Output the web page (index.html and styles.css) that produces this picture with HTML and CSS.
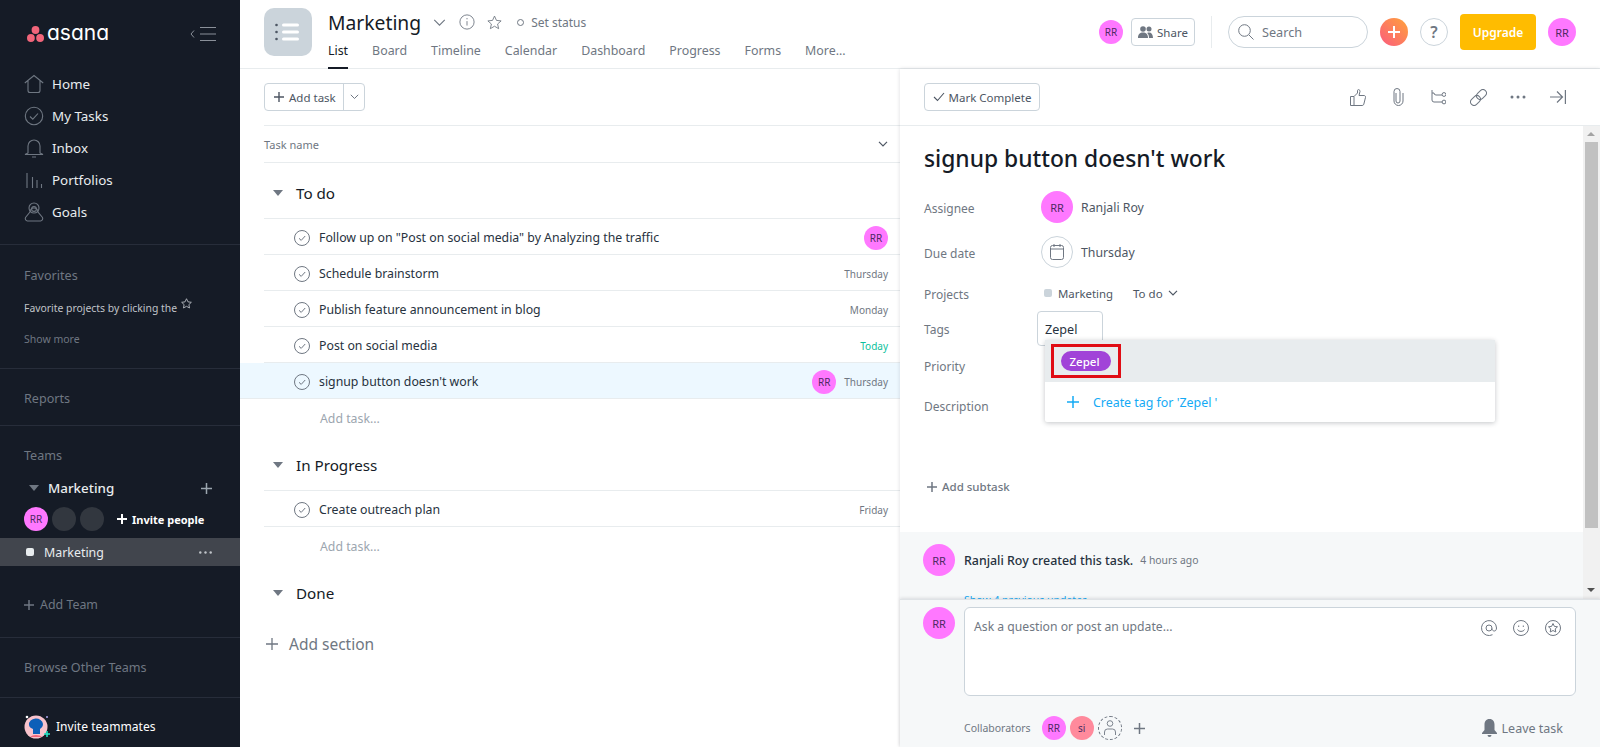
FILE: index.html
```html
<!DOCTYPE html>
<html lang="en">
<head>
    <meta charset="UTF-8">
    <title>Marketing - Asana</title>
    <link rel="stylesheet" href="styles.css">
</head>
<body>
    <aside class="sidebar">
        <div class="brand">
            <div class="logo">
                <svg width="17" height="16" viewBox="0 0 17 16"><circle cx="8.500" cy="4" r="3.900" fill="#f1657a"/><circle cx="3.900" cy="12" r="3.900" fill="#f1657a"/><circle cx="13.100" cy="12" r="3.900" fill="#f1657a"/></svg>
                <span class="logo-word">asana</span>
            </div>
            <svg class="collapse" width="26" height="14" viewBox="0 0 26 14" fill="none" stroke="#8a9099"><path d="M4 3.500 1 7l3 3.500M10 .5h16M10 7h16M10 13.500h16"/></svg>
        </div>
        <nav class="nav">
            <a class="nav-item"><svg width="20" height="20" viewBox="0 0 20 20" fill="none" stroke="#6f7782" stroke-width="1.100"><path d="M.8 9 10 1.500 19.200 9M4 7v9.500a2 2 0 0 0 2 2h8a2 2 0 0 0 2-2V7"/></svg>Home</a>
            <a class="nav-item"><svg width="20" height="20" viewBox="0 0 20 20" fill="none" stroke="#6f7782" stroke-width="1.100"><circle cx="10" cy="10" r="8.700"/><path d="m6 10.500 2.800 2.600L14 7.500"/></svg>My Tasks</a>
            <a class="nav-item"><svg width="20" height="20" viewBox="0 0 20 20" fill="none" stroke="#6f7782" stroke-width="1.100"><path d="M4 15V8a6 6 0 0 1 12 0v7l3 1.500H1ZM8 19h4"/></svg>Inbox</a>
            <a class="nav-item"><svg width="20" height="20" viewBox="0 0 20 20" fill="none" stroke="#6f7782" stroke-width="1.100"><path d="M3 3v15M8.500 7v11M13 10v8M17.500 14v4"/></svg>Portfolios</a>
            <a class="nav-item"><svg width="20" height="20" viewBox="0 0 20 20" fill="none" stroke="#6f7782" stroke-width="1.100"><circle cx="10" cy="6" r="5"/><circle cx="10" cy="7" r="2.400"/><path d="M6 10 1.500 15.500a2.500 2.500 0 0 0 2 3.500h13a2.500 2.500 0 0 0 2-3.500L14 10a4 4 0 0 0-8 0Z"/></svg>Goals</a>
        </nav>
        <section class="side-block favorites">
            <div class="side-title">Favorites</div>
            <div class="fav-hint">Favorite projects by clicking the <svg class="fav-star" width="11" height="11" viewBox="0 0 12 12" fill="none" stroke="#b4b8be"><path d="m6 .8 1.600 3.400 3.700.5-2.700 2.500.7 3.700L6 9.100l-3.300 1.800.7-3.700L.7 4.700l3.700-.5Z"/></svg></div>
            <div class="show-more">Show more</div>
        </section>
        <section class="side-block reports"><div class="side-title">Reports</div></section>
        <section class="side-block teams">
            <div class="side-title">Teams</div>
            <div class="team-row">
                <span class="caret caret-side"></span>
                <span class="team-name">Marketing</span>
                <svg width="11" height="11" viewBox="0 0 11 11" stroke="#9ca6af" stroke-width="1.500"><path d="M5.500 0v11M0 5.500h11"/></svg>
            </div>
            <div class="team-people">
                <span class="avatar">RR</span>
                <span class="avatar avatar-empty"></span>
                <span class="avatar avatar-empty"></span>
                <span class="invite"><svg width="10" height="10" viewBox="0 0 10 10" stroke="#fff" stroke-width="2"><path d="M5 0v10M0 5h10"/></svg>Invite people</span>
            </div>
            <div class="project-row">
                <span class="project-dot"></span>
                <span class="project-name">Marketing</span>
                <svg width="13" height="3" viewBox="0 0 13 3" fill="#c0c4c9"><circle cx="1.300" cy="1.500" r="1.200"/><circle cx="6.500" cy="1.500" r="1.200"/><circle cx="11.700" cy="1.500" r="1.200"/></svg>
            </div>
            <div class="add-team"><svg width="10" height="10" viewBox="0 0 10 10" stroke="#6f7782" stroke-width="1.500"><path d="M5 0v10M0 5h10"/></svg>Add Team</div>
        </section>
        <section class="side-block browse"><div class="side-title">Browse Other Teams</div></section>
        <div class="invite-mates">
            <svg width="26" height="26" viewBox="0 0 26 26"><circle cx="12" cy="13" r="11.500" fill="#f8c3cc"/><path d="M5 11a7 6 0 0 1 14-1c0 3-2 4-3 5v5H9v-5c-2-1-4-2-4-4Z" fill="#0d5fb8"/><path d="M6 23a7 4 0 0 1 12 0Z" fill="#f1657a"/><path d="M20 20h6M23 17v6" stroke="#25e8c8" stroke-width="1.500"/><circle cx="23" cy="3" r="1" fill="#a9a4ee"/><circle cx="3" cy="3" r="1.300" fill="#fff"/></svg>
            <span>Invite teammates</span>
        </div>
    </aside>

    <div class="main">
        <header class="topbar">
            <div class="project-icon">
                <svg width="24" height="18" viewBox="0 0 24 18"><g fill="#4d5663"><circle cx="1.500" cy="2" r="1.300"/><circle cx="1.500" cy="9" r="1.300"/><circle cx="1.500" cy="16" r="1.300"/></g><g fill="#fff"><rect x="7" y=".5" width="17" height="3" rx="1.500"/><rect x="7" y="7.500" width="17" height="3" rx="1.500"/><rect x="7" y="14.500" width="17" height="3" rx="1.500"/></g></svg>
            </div>
            <div class="project-head">
                <div class="project-title">
                    <h1>Marketing</h1>
                    <svg class="title-chevron" width="13" height="7" viewBox="0 0 14 8" fill="none" stroke="#6f7782" stroke-width="1.300"><path d="m1 1 6 6 6-6"/></svg>
                    <svg class="title-info" width="16" height="16" viewBox="0 0 18 18" fill="none" stroke="#6f7782"><circle cx="9" cy="9" r="8"/><path d="M9 8v5M9 4.500v1.500"/></svg>
                    <svg class="title-star" width="15" height="15" viewBox="0 0 17 17" fill="none" stroke="#6f7782"><path d="m8.500 1.200 2.200 4.900 5.300.6-4 3.500 1.200 5.300-4.700-2.800-4.700 2.800 1.200-5.300-4-3.500 5.300-.6Z"/></svg>
                    <span class="status"><i class="status-dot"></i>Set status</span>
                </div>
                <div class="tabs">
                    <a class="tab tab-active">List</a>
                    <a class="tab">Board</a>
                    <a class="tab">Timeline</a>
                    <a class="tab">Calendar</a>
                    <a class="tab">Dashboard</a>
                    <a class="tab">Progress</a>
                    <a class="tab">Forms</a>
                    <a class="tab">More...</a>
                </div>
            </div>
            <div class="top-actions">
                <span class="avatar">RR</span>
                <button class="share">
                    <svg width="15" height="12" viewBox="0 0 15 12" fill="#6f7782"><circle cx="5" cy="3" r="2.800"/><circle cx="11" cy="3" r="2.500"/><path d="M0 12c0-4 2-5.500 5-5.500s5 1.500 5 5.500ZM11 12h4c0-3.500-1.500-5.500-4-5.500-.7 0-1.300.1-1.800.4 1.200 1 1.800 2.800 1.800 5.100Z"/></svg>
                    Share
                </button>
                <span class="top-sep"></span>
                <div class="search">
                    <svg width="16" height="16" viewBox="0 0 16 16" fill="none" stroke="#6f7782"><circle cx="6.500" cy="6.500" r="5.800"/><path d="m11 11 4.500 4.500"/></svg>
                    <span>Search</span>
                </div>
                <span class="round-add">
                    <svg width="12" height="12" viewBox="0 0 12 12" stroke="#fff" stroke-width="2"><path d="M6 0v12M0 6h12"/></svg>
                </span>
                <span class="round-help">?</span>
                <button class="upgrade">Upgrade</button>
                <span class="avatar avatar-lg">RR</span>
            </div>
        </header>

        <div class="workspace">
            <section class="list-pane">
                <div class="list-toolbar">
                    <div class="add-task-btn">
                        <span class="add-task-main"><svg width="10" height="10" viewBox="0 0 10 10" stroke="#4d5663" stroke-width="1.400"><path d="M5 0v10M0 5h10"/></svg>Add task</span>
                        <span class="add-task-more"><svg width="9" height="6" viewBox="0 0 9 6" fill="none" stroke="#6f7782"><path d="m.8.8 3.700 3.700L8.200.8"/></svg></span>
                    </div>
                </div>
                <div class="list-head">
                    <span>Task name</span>
                    <svg width="10" height="6" viewBox="0 0 10 6" fill="none" stroke="#4d5663" stroke-width="1.200"><path d="m1 .8 4 4 4-4"/></svg>
                </div>

                <div class="section-head section-first"><span class="caret"></span>To do</div>
                <div class="task">
                    <svg class="check" width="16" height="16" viewBox="0 0 16 16" fill="none" stroke="#6f7782"><circle cx="8" cy="8" r="7.500"/><path d="m5 8.300 2.200 2.100L11.200 6"/></svg>
                    <span class="task-name">Follow up on "Post on social media" by Analyzing the traffic</span>
                    <span class="avatar">RR</span>
                </div>
                <div class="task">
                    <svg class="check" width="16" height="16" viewBox="0 0 16 16" fill="none" stroke="#6f7782"><circle cx="8" cy="8" r="7.500"/><path d="m5 8.300 2.200 2.100L11.200 6"/></svg>
                    <span class="task-name">Schedule brainstorm</span>
                    <span class="task-date">Thursday</span>
                </div>
                <div class="task">
                    <svg class="check" width="16" height="16" viewBox="0 0 16 16" fill="none" stroke="#6f7782"><circle cx="8" cy="8" r="7.500"/><path d="m5 8.300 2.200 2.100L11.200 6"/></svg>
                    <span class="task-name">Publish feature announcement in blog</span>
                    <span class="task-date">Monday</span>
                </div>
                <div class="task">
                    <svg class="check" width="16" height="16" viewBox="0 0 16 16" fill="none" stroke="#6f7782"><circle cx="8" cy="8" r="7.500"/><path d="m5 8.300 2.200 2.100L11.200 6"/></svg>
                    <span class="task-name">Post on social media</span>
                    <span class="task-date task-today">Today</span>
                </div>
                <div class="task task-selected">
                    <svg class="check" width="16" height="16" viewBox="0 0 16 16" fill="none" stroke="#6f7782"><circle cx="8" cy="8" r="7.500"/><path d="m5 8.300 2.200 2.100L11.200 6"/></svg>
                    <span class="task-name">signup button doesn't work</span>
                    <span class="avatar">RR</span>
                    <span class="task-date">Thursday</span>
                </div>
                <div class="add-row">Add task...</div>

                <div class="section-head"><span class="caret"></span>In Progress</div>
                <div class="task">
                    <svg class="check" width="16" height="16" viewBox="0 0 16 16" fill="none" stroke="#6f7782"><circle cx="8" cy="8" r="7.500"/><path d="m5 8.300 2.200 2.100L11.200 6"/></svg>
                    <span class="task-name">Create outreach plan</span>
                    <span class="task-date">Friday</span>
                </div>
                <div class="add-row">Add task...</div>

                <div class="section-head section-done"><span class="caret"></span>Done</div>
                <div class="add-section"><svg width="12" height="12" viewBox="0 0 12 12" stroke="#6f7782" stroke-width="1.300"><path d="M6 0v12M0 6h12"/></svg>Add section</div>
            </section>

            <section class="detail">
                <div class="detail-toolbar">
                    <button class="mark-complete">
                        <svg width="12" height="10" viewBox="0 0 12 10" fill="none" stroke="#4d5663" stroke-width="1.100"><path d="m1 5 3.500 3.500L11 1"/></svg>
                        Mark Complete
                    </button>
                    <div class="detail-icons">
                        <svg width="16" height="17" viewBox="0 0 16 17" fill="none" stroke="#6f7782"><path d="M.5 7.500h3.500v9H.5ZM4 7.500 7.500 4V1.500c0-1.300 2.500-1.300 2.500.8L9 6.500h5c1 0 1.800.9 1.500 1.900l-1.700 6.800c-.2.800-.8 1.300-1.600 1.300H4"/></svg>
                        <svg width="12" height="18" viewBox="0 0 12 18" fill="none" stroke="#6f7782"><path d="M4 5v8a2 2 0 0 0 4 0V3.500a3 3 0 0 0-6 0V13a4.500 4.500 0 0 0 9 0V5"/></svg>
                        <svg width="15" height="15" viewBox="0 0 15 15" fill="none" stroke="#6f7782"><path d="M1 0v10a2 2 0 0 0 2 2h8M1 3h2a2 2 0 0 0 2 2h6"/><circle cx="13" cy="4.500" r="1.900"/><circle cx="13" cy="12" r="1.900"/></svg>
                        <svg width="17" height="17" viewBox="0 0 17 17" fill="none" stroke="#6f7782"><rect x="0" y="8" width="11" height="7" rx="3.500" transform="rotate(-45 5.500 11.500)"/><rect x="6" y="2" width="11" height="7" rx="3.500" transform="rotate(-45 11.500 5.500)"/></svg>
                        <svg width="16" height="4" viewBox="0 0 16 4" fill="#6f7782"><circle cx="2" cy="2" r="1.500"/><circle cx="8" cy="2" r="1.500"/><circle cx="14" cy="2" r="1.500"/></svg>
                        <svg width="16" height="14" viewBox="0 0 16 14" fill="none" stroke="#6f7782" stroke-width="1.200"><path d="M0 7h12M7 1.500 12.500 7 7 12.500M15.400 0v14"/></svg>
                    </div>
                </div>

                <div class="detail-scroll">
                    <div class="detail-body">
                        <h2 class="detail-title">signup button doesn't work</h2>
                        <div class="field field-assignee">
                            <span class="field-label">Assignee</span>
                            <span class="avatar avatar-xl">RR</span>
                            <span class="field-value">Ranjali Roy</span>
                        </div>
                        <div class="field field-due">
                            <span class="field-label">Due date</span>
                            <span class="date-circle"><svg width="14" height="16" viewBox="0 0 14 16" fill="none" stroke="#6f7782"><rect x=".5" y="1.500" width="13" height="14" rx="2"/><path d="M.5 5h13M4 0v3M10 0v3"/></svg></span>
                            <span class="field-value">Thursday</span>
                        </div>
                        <div class="field field-projects">
                            <span class="field-label">Projects</span>
                            <span class="project-chip"></span>
                            <span class="project-link">Marketing</span>
                            <span class="project-section">To do</span>
                            <svg width="10" height="6" viewBox="0 0 10 6" fill="none" stroke="#4d5663" stroke-width="1.200"><path d="m1 .8 4 4 4-4"/></svg>
                        </div>
                        <div class="field field-tags">
                            <span class="field-label">Tags</span>
                            <span class="tag-input">Zepel</span>
                        </div>
                        <div class="field field-priority"><span class="field-label">Priority</span></div>
                        <div class="field field-description"><span class="field-label">Description</span></div>
                        <div class="add-subtask"><svg width="10" height="10" viewBox="0 0 10 10" stroke="#6f7782" stroke-width="1.500"><path d="M5 0v10M0 5h10"/></svg>Add subtask</div>

                        <div class="tag-menu">
                            <div class="tag-option">
                                <span class="tag-highlight"><span class="tag-pill">Zepel</span></span>
                            </div>
                            <div class="tag-create"><span class="tag-create-plus"><svg width="12" height="12" viewBox="0 0 12 12" stroke="#14aaf5" stroke-width="1.500"><path d="M6 0v12M0 6h12"/></svg></span>Create tag for 'Zepel '</div>
                        </div>
                    </div>
                    <div class="activity">
                        <div class="activity-row">
                            <span class="avatar avatar-xl">RR</span>
                            <span class="activity-text">Ranjali Roy created this task.</span>
                            <span class="activity-time">4 hours ago</span>
                        </div>
                        <div class="previous-updates">Show 4 previous updates</div>
                    </div>
                    <div class="scrollbar">
                        <span class="scroll-arrow scroll-up"></span>
                        <span class="scroll-thumb"></span>
                        <span class="scroll-arrow scroll-down"></span>
                    </div>
                </div>

                <div class="composer">
                    <div class="composer-row">
                        <span class="avatar avatar-xl">RR</span>
                        <div class="comment-box">
                            <span>Ask a question or post an update...</span>
                            <div class="comment-icons">
                                <svg width="16" height="16" viewBox="0 0 16 16" fill="none" stroke="#6f7782"><path d="M11.500 14.700A7.500 7.500 0 1 1 15.500 8c0 2-1 3-2.200 3S11 10 11 8.500"/><circle cx="8" cy="8" r="3"/></svg>
                                <svg width="16" height="16" viewBox="0 0 16 16" fill="none" stroke="#6f7782"><circle cx="8" cy="8" r="7.500"/><path d="M4.500 9.500c1 2.500 6 2.500 7 0M5.700 5.500v1.500M10.300 5.500v1.500"/></svg>
                                <svg width="16" height="16" viewBox="0 0 16 16" fill="none" stroke="#6f7782"><circle cx="8" cy="8" r="7.500"/><path d="m8 3.500 1.400 2.900 3.100.4-2.300 2.100.6 3.100L8 10.500l-2.800 1.500.6-3.100-2.300-2.100 3.100-.4Z"/></svg>
                            </div>
                        </div>
                    </div>
                    <div class="collaborators">
                        <span class="collab-label">Collaborators</span>
                        <span class="avatar">RR</span>
                        <span class="avatar avatar-pink">si</span>
                        <span class="avatar avatar-open"><svg width="12" height="16" viewBox="0 0 12 16" fill="none" stroke="#6f7782" stroke-width=".9"><circle cx="6" cy="3.500" r="2.800"/><path d="M.5 15v-3a3 3 0 0 1 3-3h5a3 3 0 0 1 3 3v3"/></svg></span>
                        <span class="collab-add"><svg width="11" height="11" viewBox="0 0 11 11" stroke="#6f7782" stroke-width="1.500"><path d="M5.500 0v11M0 5.500h11"/></svg></span>
                        <span class="leave"><svg width="15" height="18" viewBox="0 0 15 18" fill="#6f7782"><path d="M7.500 0C4 0 2.500 2.500 2.500 5.500V11L0 14v1h15v-1l-2.500-3V5.500C12.500 2.500 11 0 7.500 0ZM5.500 16h4a2 2 0 0 1-4 0Z"/></svg>Leave task</span>
                    </div>
                </div>
            </section>
        </div>
    </div>
</body>
</html>
```

FILE: styles.css
```css
* {
    box-sizing: border-box;
}
html, body {
    height: 100%;
}
body {
    margin: 0;
    display: flex;
    height: 747px;
    overflow: hidden;
    font-family: "Noto Sans", "Open Sans", sans-serif;
    font-size: 13px;
    color: #151b26;
    background: #fff;
}
button {
    font-family: inherit;
    cursor: pointer;
}

/* avatars */
.avatar {
    flex: none;
    display: flex;
    align-items: center;
    justify-content: center;
    width: 24px;
    height: 24px;
    border-radius: 50%;
    background: #ff78ff;
    color: #4d2a63;
    font-size: 10px;
}
.avatar-lg {
    width: 28px;
    height: 28px;
    font-size: 11px;
}
.avatar-xl {
    width: 32px;
    height: 32px;
    font-size: 11px;
}
.avatar-pink {
    background: #ff8a9c;
}
.avatar-empty {
    background: #32373f;
    margin-left: 4px;
}
.avatar-open {
    background: none;
    border: 1px dashed #6f7782;
}

/* sidebar */
.sidebar {
    flex: none;
    width: 240px;
    height: 747px;
    background: #151b26;
    color: #f6f8f9;
    display: flex;
    flex-direction: column;
}
.brand {
    height: 68px;
    padding: 0 24px 0 27px;
    display: flex;
    align-items: center;
    justify-content: space-between;
}
.logo {
    display: flex;
    align-items: center;
    gap: 3px;
}
.logo-word {
    font-family: "Inter", sans-serif;
    font-feature-settings: "cv11" 1;
    font-size: 21px;
    line-height: 20px;
    font-weight: 400;
    color: #fff;
    margin-top: -2px;
}
.nav {
    padding-bottom: 16px;
    border-bottom: 1px solid #272d3a;
}
.nav-item {
    height: 32px;
    padding-left: 24px;
    display: flex;
    align-items: center;
    gap: 8px;
    font-size: 13.400px;
    color: #e8ecee;
}
.side-block {
    padding: 0 24px;
    border-bottom: 1px solid #272d3a;
}
.side-title {
    font-size: 12.600px;
    color: #6f7782;
}
.favorites {
    height: 124px;
    padding-top: 22px;
}
.fav-hint {
    margin-top: 14px;
    font-size: 10.400px;
    color: #c0c4c9;
}
.fav-star {
    vertical-align: 3px;
    margin-left: 1px;
}
.show-more {
    margin-top: 17px;
    font-size: 10.500px;
    color: #6f7782;
}
.reports {
    height: 57px;
    padding-top: 21px;
}
.teams {
    height: 212px;
    padding: 21px 0 0;
}
.teams .side-title {
    padding-left: 24px;
}
.team-row {
    height: 32px;
    margin-top: 8px;
    padding: 0 28px 0 29px;
    display: flex;
    align-items: center;
}
.caret {
    display: inline-block;
    width: 0;
    height: 0;
    border-left: 5px solid transparent;
    border-right: 5px solid transparent;
    border-top: 6px solid #6f7782;
}
.team-name {
    margin-left: 9px;
    font-size: 13.400px;
    font-weight: 500;
    color: #e8ecee;
    flex: 1;
}
.team-people {
    height: 28px;
    margin-top: 1px;
    padding-left: 24px;
    display: flex;
    align-items: center;
}
.invite {
    margin-left: 13px;
    font-size: 11px;
    font-weight: 700;
    color: #fff;
    display: flex;
    align-items: center;
    gap: 5px;
}
.project-row {
    height: 28px;
    margin-top: 5px;
    padding: 0 28px 0 26px;
    display: flex;
    align-items: center;
    background: #41454d;
}
.project-dot {
    width: 8px;
    height: 8px;
    border-radius: 2px;
    background: #e8ecee;
}
.project-name {
    margin-left: 10px;
    flex: 1;
    font-size: 12.400px;
    color: #e8ecee;
}
.add-team {
    margin-top: 30px;
    padding-left: 24px;
    display: flex;
    align-items: center;
    gap: 6px;
    font-size: 12.400px;
    color: #6f7782;
}
.browse {
    height: 60px;
    padding-top: 21px;
}
.invite-mates {
    flex: 1;
    padding: 8px 24px 0;
    display: flex;
    align-items: center;
    gap: 6px;
    font-size: 12.100px;
    color: #fff;
}

/* top bar */
.main {
    flex: 1;
    min-width: 0;
    display: flex;
    flex-direction: column;
    height: 747px;
}
.topbar {
    flex: none;
    height: 69px;
    padding: 8px 24px 0;
    border-bottom: 1px solid #e8ecee;
    display: flex;
    align-items: flex-start;
}
.project-icon {
    width: 48px;
    height: 48px;
    border-radius: 10px;
    background: #cbd4db;
    display: flex;
    align-items: center;
    justify-content: center;
    padding-right: 2px;
}
.project-head {
    margin-left: 16px;
}
.project-title {
    height: 28px;
    display: flex;
    align-items: center;
}
.project-title h1 {
    margin: 0;
    font-size: 19.300px;
    font-weight: 400;
    color: #151b26;
}
.title-chevron {
    margin-left: 12px;
}
.title-info {
    margin-left: 13px;
}
.title-star {
    margin-left: 12px;
}
.status {
    margin-left: 15px;
    font-size: 12px;
    color: #6f7782;
    display: flex;
    align-items: center;
}
.status-dot {
    width: 7px;
    height: 7px;
    border: 1px solid #6f7782;
    border-radius: 50%;
    margin-right: 7px;
}
.tabs {
    display: flex;
    gap: 24px;
    margin-top: 2px;
}
.tab {
    height: 31px;
    padding-top: 4px;
    font-size: 12.400px;
    color: #6f7782;
    border-bottom: 2px solid transparent;
}
.tab-active {
    color: #151b26;
    border-bottom-color: #151b26;
}
.top-actions {
    margin-left: auto;
    padding-top: 6px;
    display: flex;
    align-items: center;
}
.share {
    margin-left: 8px;
    width: 64px;
    height: 28px;
    padding: 0;
    background: #fff;
    border: 1px solid #cbd4db;
    border-radius: 4px;
    font-size: 11.500px;
    color: #4d5663;
    display: flex;
    align-items: center;
    justify-content: center;
    gap: 4px;
}
.top-sep {
    width: 1px;
    height: 32px;
    margin: 0 16px;
    background: #e8ecee;
}
.search {
    width: 140px;
    height: 32px;
    padding-left: 9px;
    border: 1px solid #cbd4db;
    border-radius: 16px;
    display: flex;
    align-items: center;
    gap: 8px;
    font-size: 12.700px;
    color: #6f7782;
}
.round-add, .round-help {
    width: 28px;
    height: 28px;
    border-radius: 50%;
    display: flex;
    align-items: center;
    justify-content: center;
    margin-left: 12px;
}
.round-add {
    background: linear-gradient(45deg, #fb5b7f, #ffa33a);
}
.round-help {
    border: 1px solid #cbd4db;
    font-size: 16px;
    font-weight: 600;
    color: #6f7782;
}
.upgrade {
    width: 76px;
    height: 36px;
    margin-left: 12px;
    background: #ffbc00;
    border: none;
    border-radius: 4px;
    color: #fff;
    font-size: 12px;
    font-weight: 600;
}
.top-actions .avatar-lg {
    margin-left: 12px;
}

/* list */
.workspace {
    flex: 1;
    min-height: 0;
    display: flex;
}
.list-pane {
    width: 660px;
    flex: none;
    padding-left: 24px;
}
.list-toolbar {
    height: 57px;
    padding-top: 14px;
    border-bottom: 1px solid #e8ecee;
}
.add-task-btn {
    width: 101px;
    height: 28px;
    border: 1px solid #cbd4db;
    border-radius: 4px;
    display: flex;
    font-size: 11.500px;
    color: #4d5663;
}
.add-task-main {
    flex: 1;
    display: flex;
    align-items: center;
    gap: 5px;
    padding-left: 9px;
    border-right: 1px solid #cbd4db;
}
.add-task-more {
    width: 20px;
    display: flex;
    align-items: center;
    justify-content: center;
}
.list-head {
    height: 37px;
    padding-right: 12px;
    border-bottom: 1px solid #e8ecee;
    display: flex;
    align-items: center;
    justify-content: space-between;
    font-size: 11px;
    color: #6f7782;
}
.section-head {
    height: 54px;
    padding: 2px 0 0 9px;
    border-bottom: 1px solid #e8ecee;
    display: flex;
    align-items: center;
    font-size: 15.200px;
    color: #151b26;
}
.section-first {
    height: 56px;
    padding-top: 4px;
}
.section-done {
    border-bottom: none;
}
.section-head .caret {
    margin-right: 13px;
}
.task {
    height: 36px;
    padding: 2px 12px 0 30px;
    border-bottom: 1px solid #e8ecee;
    display: flex;
    align-items: center;
    font-size: 12.300px;
    color: #4d5663;
}
.task-selected {
    background: #edf8ff;
    margin-left: -24px;
    padding-left: 54px;
}
.check {
    flex: none;
    margin-right: 9px;
}
.task-name {
    flex: 1;
    color: #273240;
}
.task-date {
    margin-left: 8px;
    font-size: 10px;
    color: #6f7782;
}
.task-today {
    color: #0cbf9c;
}
.add-row {
    height: 38px;
    padding-left: 56px;
    display: flex;
    align-items: center;
    font-size: 12.300px;
    color: #9ca6af;
}
.add-section {
    height: 50px;
    padding-left: 2px;
    display: flex;
    align-items: center;
    gap: 11px;
    font-size: 15.500px;
    color: #6f7782;
}

/* detail */
.detail {
    flex: 1;
    min-width: 0;
    display: flex;
    flex-direction: column;
    box-shadow: 0 0 4px rgba(21, 27, 38, .15);
    position: relative;
}
.detail-toolbar {
    flex: none;
    height: 57px;
    padding: 14px 22px 0 24px;
    border-bottom: 1px solid #e8ecee;
    display: flex;
    align-items: flex-start;
    justify-content: space-between;
}
.mark-complete {
    width: 116px;
    height: 28px;
    padding: 0;
    background: #fff;
    border: 1px solid #cbd4db;
    border-radius: 4px;
    font-size: 11.500px;
    color: #4d5663;
    display: flex;
    align-items: center;
    justify-content: center;
    gap: 4px;
}
.detail-icons {
    height: 28px;
    display: grid;
    grid-template-columns: repeat(6, 40px);
    justify-items: center;
    align-items: center;
}
.detail-scroll {
    flex: none;
    height: 473px;
    overflow: hidden;
    position: relative;
    display: flex;
    flex-direction: column;
}
.detail-body {
    flex: none;
    height: 406px;
    padding: 0 24px;
    position: relative;
}
.detail-title {
    margin: 0;
    height: 65px;
    padding-top: 16px;
    font-size: 22.800px;
    line-height: 33px;
    font-weight: 500;
    color: #151b26;
}
.field {
    display: flex;
    align-items: center;
    font-size: 12.300px;
    color: #6f7782;
}
.field-label {
    flex: none;
    width: 117px;
    margin-top: 2px;
    font-size: 12px;
    color: #6f7782;
}
.field-assignee {
    height: 32px;
}
.field-due {
    height: 32px;
    margin-top: 13px;
}
.field-projects {
    height: 20px;
    margin-top: 15px;
}
.field-tags {
    height: 35px;
    margin-top: 8px;
}
.field-priority {
    height: 20px;
    margin-top: 9px;
}
.field-description {
    height: 20px;
    margin-top: 20px;
}
.field-value {
    margin-left: 8px;
    color: #4d5663;
}
.date-circle {
    width: 32px;
    height: 32px;
    border: 1px solid #cbd4db;
    border-radius: 50%;
    display: flex;
    align-items: center;
    justify-content: center;
}
.project-chip {
    width: 8px;
    height: 8px;
    margin-left: 3px;
    margin-right: 6px;
    border-radius: 2px;
    background: #cbd4db;
}
.project-link {
    font-size: 11.400px;
    color: #4d5663;
}
.project-section {
    margin-left: 20px;
    margin-right: 5px;
    font-size: 11.500px;
    color: #4d5663;
}
.tag-input {
    width: 66px;
    height: 35px;
    margin-left: -4px;
    padding: 2px 0 0 7px;
    border: 1px solid #cbd4db;
    border-radius: 4px;
    display: flex;
    align-items: center;
    font-size: 12.600px;
    color: #273240;
}
.add-subtask {
    margin-top: 64px;
    padding-left: 3px;
    display: flex;
    align-items: center;
    gap: 5px;
    font-size: 11.500px;
    font-weight: 500;
    color: #6f7782;
}
.tag-menu {
    position: absolute;
    top: 214px;
    left: 145px;
    width: 450px;
    background: #fff;
    border-radius: 2px;
    box-shadow: 0 1px 5px rgba(21, 27, 38, .25);
    z-index: 2;
}
.tag-option {
    height: 42px;
    background: #e8ecee;
    padding: 4px 0 0 6px;
}
.tag-highlight {
    display: flex;
    align-items: center;
    width: 70px;
    height: 34px;
    padding-left: 7px;
    border: 3px solid #e00d15;
}
.tag-pill {
    display: flex;
    align-items: center;
    justify-content: center;
    width: 50px;
    height: 20px;
    padding-right: 3px;
    border-radius: 10px;
    background: #a143d8;
    color: #fff;
    font-size: 11.500px;
    font-weight: 500;
}
.tag-create {
    height: 40px;
    padding-left: 22px;
    display: flex;
    align-items: center;
    font-size: 12.400px;
    color: #14aaf5;
}
.tag-create-plus {
    display: flex;
    margin-right: 14px;
}
.activity {
    flex: 1;
    background: #f6f8f9;
    padding: 12px 24px 0 23px;
}
.activity-row {
    display: flex;
    align-items: center;
}
.activity-text {
    margin-left: 9px;
    font-size: 12.400px;
    font-weight: 500;
    color: #273240;
}
.activity-time {
    margin-left: 7px;
    font-size: 10.400px;
    color: #6f7782;
}
.previous-updates {
    margin: 17px 0 0 41px;
    font-size: 10.500px;
    color: #14aaf5;
}
.scrollbar {
    position: absolute;
    top: 0;
    right: 0;
    bottom: 0;
    width: 17px;
    padding: 16px 2px 0;
    background: #f1f1f1;
}
.scroll-thumb {
    display: block;
    height: 386px;
    background: #c1c1c1;
}
.scroll-arrow {
    position: absolute;
    left: 4px;
    width: 0;
    height: 0;
    border-left: 4px solid transparent;
    border-right: 4px solid transparent;
}
.scroll-up {
    top: 6px;
    border-bottom: 4px solid #a3a3a3;
}
.scroll-down {
    bottom: 7px;
    border-top: 4px solid #505050;
}
.composer {
    flex: 1;
    background: #f6f8f9;
    border-top: 1px solid #dfe3e6;
    box-shadow: 0 -1px 3px rgba(21, 27, 38, .12);
    padding: 7px 24px 0 23px;
    position: relative;
}
.composer-row {
    display: flex;
    gap: 9px;
}
.comment-box {
    flex: 1;
    height: 89px;
    padding: 10px 10px 0 9px;
    background: #fff;
    border: 1px solid #cbd4db;
    border-radius: 6px;
    display: flex;
    justify-content: space-between;
    font-size: 12.200px;
    color: #6f7782;
}
.comment-icons {
    width: 80px;
    padding-top: 2px;
    margin-right: 4px;
    display: flex;
    justify-content: space-between;
    align-items: flex-start;
}
.collaborators {
    margin: 20px 0 0 41px;
    display: flex;
    align-items: center;
    gap: 4px;
}
.collab-label {
    font-size: 10.500px;
    color: #6f7782;
    margin-right: 7px;
}
.collab-add {
    display: flex;
    margin-left: 8px;
}
.leave {
    margin-left: auto;
    margin-right: 13px;
    display: flex;
    align-items: center;
    gap: 5px;
    font-size: 12.500px;
    color: #6f7782;
}
```
